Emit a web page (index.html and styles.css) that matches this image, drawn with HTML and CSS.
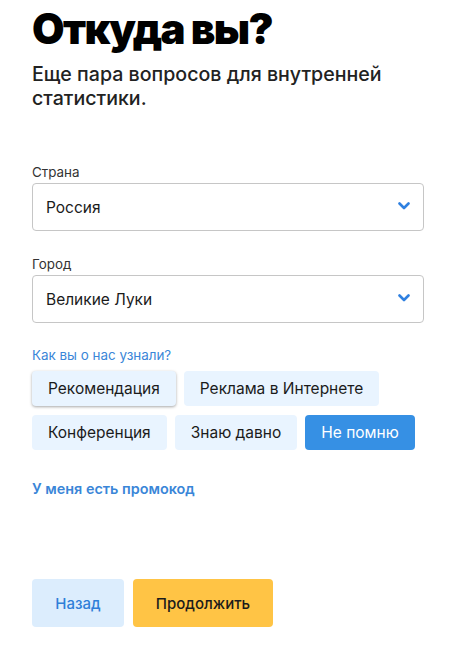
FILE: index.html
```html
<!DOCTYPE html>
<html lang="ru">
<head>
<meta charset="utf-8">
<link rel="stylesheet" href="styles.css">
</head>
<body>
<main class="page">
  <h1 class="title">Откуда вы?</h1>
  <p class="subtitle">Еще пара вопросов для внутренней статистики.</p>

  <div class="field field-first">
    <div class="label">Страна</div>
    <div class="select">
      <span class="select-value">Россия</span>
      <svg class="chevron" width="12" height="8" viewBox="0 0 12 8"><path d="M1.5 1.5 L6 6 L10.5 1.5" fill="none" stroke="#2f80e0" stroke-width="2.6" stroke-linecap="round" stroke-linejoin="round"/></svg>
    </div>
  </div>

  <div class="field">
    <div class="label">Город</div>
    <div class="select">
      <span class="select-value">Великие Луки</span>
      <svg class="chevron" width="12" height="8" viewBox="0 0 12 8"><path d="M1.5 1.5 L6 6 L10.5 1.5" fill="none" stroke="#2f80e0" stroke-width="2.6" stroke-linecap="round" stroke-linejoin="round"/></svg>
    </div>
  </div>

  <div class="question">Как вы о нас узнали?</div>
  <div class="chips">
    <div class="chip chip-hover">Рекомендация</div>
    <div class="chip">Реклама в Интернете</div>
    <div class="chip">Конференция</div>
    <div class="chip">Знаю давно</div>
    <div class="chip chip-active">Не помню</div>
  </div>

  <div class="promo">У меня есть промокод</div>

  <div class="actions">
    <div class="btn btn-back">Назад</div>
    <div class="btn btn-next">Продолжить</div>
  </div>
</main>
</body>
</html>
```
FILE: styles.css
```css
html, body {
  margin: 0;
  padding: 0;
  background: #ffffff;
}
body {
  font-family: "Inter", "Liberation Sans", sans-serif;
  color: #1b1b1b;
}
.page {
  width: 392px;
  padding: 0 0 0 32px;
}
.title {
  margin: 0;
  padding-top: 4px;
  font-family: "Inter", sans-serif;
  font-weight: 900;
  font-size: 42px;
  line-height: 50px;
  letter-spacing: -1.6px;
  color: #000;
}
.subtitle {
  margin: 8px 0 0 0;
  font-size: 19.6px;
  line-height: 24px;
  font-weight: 500;
  color: #222;
  width: 380px;
}
.field {
  margin-top: 25px;
}
.field-first {
  margin-top: 54px;
}
.label {
  font-size: 13.4px;
  line-height: 16px;
  color: #333;
  margin-bottom: 3px;
}
.select {
  height: 46px;
  border: 1px solid #c6c6c6;
  border-radius: 4px;
  display: flex;
  align-items: center;
  justify-content: space-between;
  padding: 0 13px 0 13px;
}
.select-value {
  font-size: 15.5px;
  color: #1b1b1b;
}
.chevron {
  display: block;
  margin-top: -2px;
}
.question {
  margin-top: 24px;
  font-size: 13.4px;
  line-height: 16px;
  color: #3a86d8;
}
.chips {
  margin-top: 8px;
  display: flex;
  flex-wrap: wrap;
  gap: 9px 8px;
  width: 392px;
}
.chip {
  height: 35px;
  display: flex;
  align-items: center;
  padding: 0 16px;
  background: #e9f4ff;
  border-radius: 4px;
  font-size: 15.5px;
  color: #1b1b1b;
}
.chip-hover {
  box-shadow: 0 1px 3px rgba(0, 0, 0, 0.35);
}
.chip-active {
  background: #3690e4;
  color: #ffffff;
}
.promo {
  margin-top: 30px;
  font-size: 14.4px;
  line-height: 17px;
  font-weight: 600;
  color: #3a86d8;
}
.actions {
  margin-top: 82px;
  display: flex;
  gap: 9px;
}
.btn {
  height: 48px;
  border-radius: 4px;
  display: flex;
  align-items: center;
  justify-content: center;
  font-size: 15px;
  font-weight: 500;
}
.btn-back {
  width: 92px;
  background: #dcedfd;
  color: #2f7fd8;
}
.btn-next {
  width: 140px;
  background: #ffc445;
  color: #1b1b1b;
}
```
